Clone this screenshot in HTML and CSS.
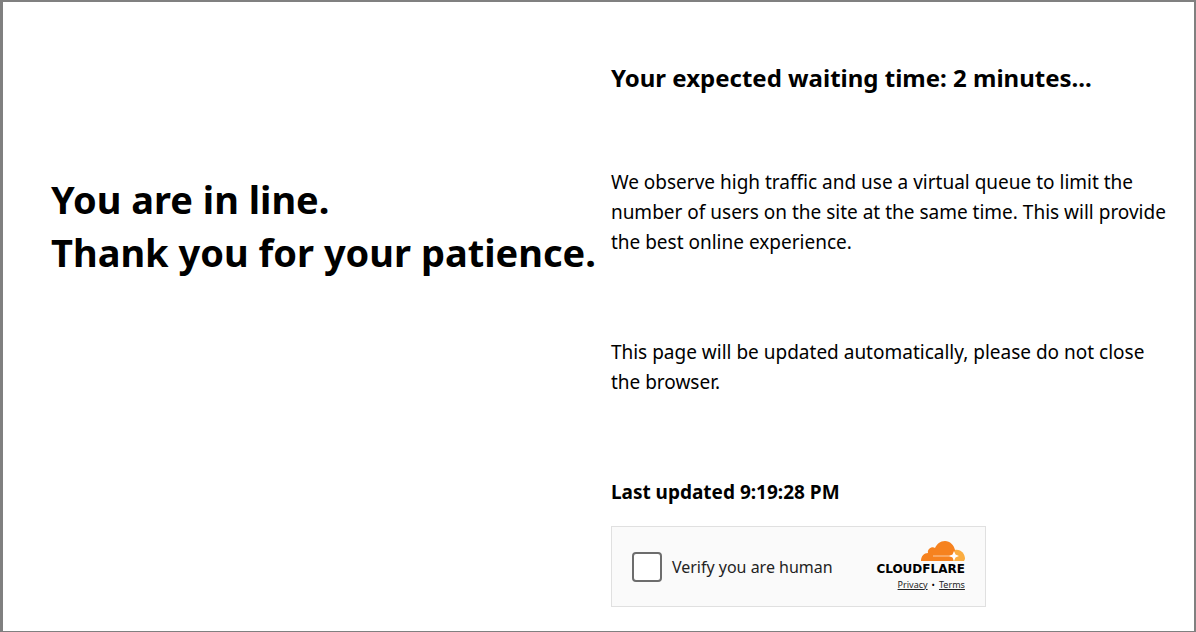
FILE: index.html
```html
<!DOCTYPE html>
<html lang="en">
<head>
<meta charset="utf-8">
<title>Virtual queue</title>
<link rel="stylesheet" href="styles.css">
</head>
<body>
<main class="page">
  <h1 class="headline">You are in line.<br>Thank you for your patience.</h1>
  <section class="details">
    <h2 class="wait">Your expected waiting time: 2 minutes...</h2>
    <p class="text">We observe high traffic and use a virtual queue to limit the number of users on the site at the same time. This will provide the best online experience.</p>
    <p class="text">This page will be updated automatically, please do not close the browser.</p>
    <p class="updated">Last updated 9:19:28 PM</p>
    <div class="widget">
      <label class="verify"><input class="check" type="checkbox"><span>Verify you are human</span></label>
      <div class="brand">
        <svg class="cloud" viewBox="0 0 44 20" aria-hidden="true">
          <path fill="#f6821f" d="M0 20C0 15 3 12 7 12C6 8 11 5 14 7C16 3 19 0 24 0C29 0 33 4 34 9L34 20Z"/>
          <path fill="#fbad41" d="M34 9C40 8 44 13 44 18L43 20H32V15Z"/>
          <path fill="none" stroke="#fff" stroke-opacity=".6" d="M12 15H32"/>
          <path fill="#fff" d="M33 10L34.5 13.5L38 15L34.5 16.5L33 20L31.5 16.5L28 15L31.5 13.5Z"/>
        </svg>
        <span class="name">CLOUDFLARE</span>
        <span class="links"><a href="#privacy">Privacy</a><span>•</span><a href="#terms">Terms</a></span>
      </div>
    </div>
  </section>
</main>
</body>
</html>
```
FILE: styles.css
```css
* { box-sizing: border-box; }
body { margin: 0; background: #fff; color: #000; font-family: "Segoe UI", "Noto Sans", sans-serif; }
.page { min-height: 100vh; border: 2px solid #808080; border-left-width: 3px; border-bottom-width: 1px; padding: 60px 24px 24px 48px; display: grid; grid-template-columns: max-content minmax(0, 1fr); gap: 15px; align-items: start; }
.headline { margin: 111px 0 0; font-size: 38px; line-height: 53px; font-weight: 700; white-space: nowrap; }
.wait { margin: 0 0 73px; font-size: 24px; line-height: 32px; }
.text { margin: 0 0 80px; font-size: 19px; line-height: 30px; }
.updated { margin: 0 0 19px; font-size: 19px; line-height: 30px; font-weight: 700; }
.widget { width: 375px; max-width: 100%; height: 81px; padding: 0 20px; display: flex; align-items: center; justify-content: space-between; border: 1px solid #e0e0e0; background: #fafafa; }
.verify { display: flex; align-items: center; gap: 10px; font-size: 16px; line-height: 24px; color: #232323; }
.check { appearance: none; width: 30px; height: 30px; margin: 0; border: 2px solid #6d6d6d; border-radius: 4px; background: #fff; }
.brand { display: flex; flex-direction: column; align-items: flex-end; }
.cloud { width: 44px; height: 20px; }
.name { font: 700 12px/16px "DejaVu Sans", sans-serif; }
.links { display: flex; gap: 4px; font-size: 9px; line-height: 16px; }
.links a { color: #232323; }
```
